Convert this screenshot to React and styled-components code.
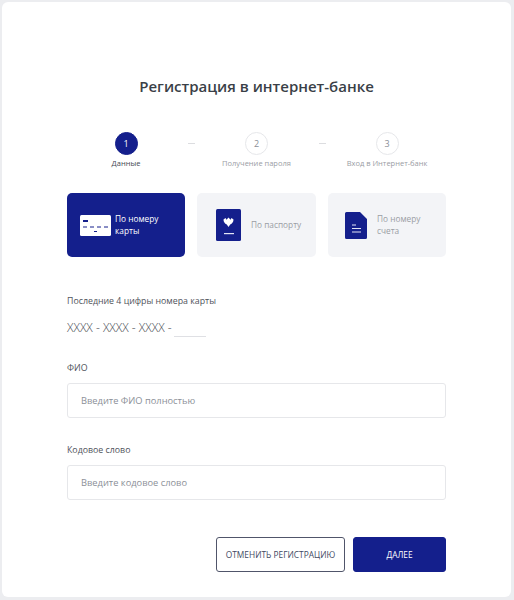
import React from 'react';
import styled, { createGlobalStyle } from 'styled-components';

const navy = '#141f8c';

const GlobalStyle = createGlobalStyle`
  html, body {
    margin: 0;
    padding: 0;
    background: #ecedf0;
    font-family: "Open Sans", "Noto Sans", sans-serif;
  }
  * { box-sizing: border-box; }
`;

const Page = styled.div`
  width: 514px;
  height: 600px;
  padding: 2px 3px 3px 2px;
`;

const Card = styled.main`
  height: 595px;
  background: #fff;
  border-radius: 6px;
  padding: 73px 65px 0;
`;

const Title = styled.h1`
  margin: 0 0 35px;
  font-size: 15px;
  line-height: 22px;
  font-weight: 600;
  color: #3a3f47;
  text-align: center;
`;

const Stepper = styled.div`
  display: grid;
  grid-template-columns: 118px 12px 119px 12px 118px;
  justify-content: center;
  margin-bottom: 25px;
`;

const Step = styled.div`
  display: flex;
  flex-direction: column;
  align-items: center;
  gap: 3px;
`;

const StepCircle = styled.div`
  width: 23px;
  height: 23px;
  border-radius: 50%;
  display: flex;
  align-items: center;
  justify-content: center;
  font-size: 9px;
  background: ${p => (p.$active ? navy : '#fff')};
  color: ${p => (p.$active ? '#fff' : '#8b8f97')};
  border: 1px solid ${p => (p.$active ? navy : '#e6e7ea')};
`;

const StepLabel = styled.div`
  font-size: 7.5px;
  line-height: 10px;
  white-space: nowrap;
  color: ${p => (p.$active ? '#444852' : '#9a9da4')};
`;

const StepDash = styled.div`
  width: 7px;
  height: 1px;
  margin: 11px auto 0;
  background: #dcdde0;
`;

const Methods = styled.div`
  display: grid;
  grid-template-columns: 118px 119px 118px;
  gap: 12px;
  margin-bottom: 38px;
`;

const Method = styled.div`
  height: 64px;
  border-radius: 5px;
  display: flex;
  align-items: center;
  padding-left: ${p => p.$pad}px;
  gap: ${p => p.$gap}px;
  font-size: 8.3px;
  line-height: 12px;
  background: ${p => (p.$active ? navy : '#f3f4f7')};
  color: ${p => (p.$active ? '#fff' : '#9a9da4')};
`;

const Field = styled.div`
  margin-bottom: ${p => p.$mb}px;
`;

const Label = styled.div`
  font-size: 8.8px;
  line-height: 12px;
  color: #4f535b;
  margin-bottom: ${p => p.$mb}px;
`;

const CardMask = styled.div`
  display: flex;
  align-items: flex-end;
  gap: 2px;
  font-size: 12px;
  line-height: 14px;
  font-weight: 300;
  color: #44484f;
`;

const DigitsLine = styled.div`
  width: 32px;
  height: 14px;
  margin-bottom: -2px;
  border-bottom: 1px solid #dfe0e4;
`;

const Input = styled.div`
  height: 35px;
  padding-left: 13px;
  display: flex;
  align-items: center;
  border: 1px solid #e6e7ea;
  border-radius: 3px;
  font-size: 9.3px;
  color: #8b8f97;
`;

const Actions = styled.div`
  display: flex;
  justify-content: flex-end;
  gap: 8px;
  margin-top: 37px;
`;

const Button = styled.button`
  width: ${p => p.$w}px;
  height: 35px;
  border-radius: 3px;
  font-family: inherit;
  font-size: 8.35px;
  padding: 0;
  border: 1px solid ${p => (p.$primary ? navy : '#50556a')};
  background: ${p => (p.$primary ? navy : '#fff')};
  color: ${p => (p.$primary ? '#fff' : '#3f4a63')};
`;

const CardIcon = () => (
  <svg width="31" height="21" viewBox="0 0 31 21">
    <rect width="31" height="21" rx="1.5" fill="#fff" />
    <rect x="3" y="5" width="5" height="2" fill={navy} />
    <path d="M3 12h4M10 12h4M17 12h4M24 12h4M14 16.500h3" stroke={navy} strokeWidth="1" />
  </svg>
);

const PassportIcon = () => (
  <svg width="25" height="32" viewBox="0 0 25 32">
    <rect width="25" height="32" rx="1.5" fill={navy} />
    <path d="M7.500 10.500L9.500 9l1 1.800L12.500 8.500l2 2.300 1-1.800 2 1.500c0 2.400-1.300 4.200-3.300 5L12.500 18l-1.700-2.500c-2-.8-3.300-2.600-3.300-5z" fill="#fff" />
    <rect x="8" y="24" width="10" height="1.200" fill="#e3e5f5" />
  </svg>
);

const DocIcon = () => (
  <svg width="22" height="27" viewBox="0 0 22 27">
    <path d="M1.500 0H15l7 7v18.500a1.500 1.500 0 0 1-1.500 1.500h-19A1.500 1.500 0 0 1 0 25.500v-24A1.500 1.500 0 0 1 1.500 0z" fill={navy} />
    <path d="M7 13h4M7 16.500h9M7 20h9" stroke="#e3e5f5" strokeWidth="1" />
  </svg>
);

const steps = [
  { n: 1, label: 'Данные', active: true },
  { n: 2, label: 'Получение пароля' },
  { n: 3, label: 'Вход в Интернет-банк' },
];

const App = () => {
  return (
    <Page>
      <GlobalStyle />
      <Card>
        <Title>Регистрация в интернет-банке</Title>
        <Stepper>
          {steps.map((s, i) => (
            <React.Fragment key={s.n}>
              <Step>
                <StepCircle $active={s.active}>{s.n}</StepCircle>
                <StepLabel $active={s.active}>{s.label}</StepLabel>
              </Step>
              {i < 2 && <StepDash />}
            </React.Fragment>
          ))}
        </Stepper>
        <Methods>
          <Method $active $pad={13} $gap={4}>
            <CardIcon />
            <div>По номеру<br />карты</div>
          </Method>
          <Method $pad={19} $gap={10}>
            <PassportIcon />
            <div>По паспорту</div>
          </Method>
          <Method $pad={17} $gap={10}>
            <DocIcon />
            <div>По номеру<br />счета</div>
          </Method>
        </Methods>
        <Field $mb={27}>
          <Label $mb={14}>Последние 4 цифры номера карты</Label>
          <CardMask>
            XXXX - XXXX - XXXX -
            <DigitsLine />
          </CardMask>
        </Field>
        <Field $mb={26}>
          <Label $mb={9}>ФИО</Label>
          <Input>Введите ФИО полностью</Input>
        </Field>
        <Field>
          <Label $mb={9}>Кодовое слово</Label>
          <Input>Введите кодовое слово</Input>
        </Field>
        <Actions>
          <Button $w={129}>ОТМЕНИТЬ РЕГИСТРАЦИЮ</Button>
          <Button $primary $w={93}>ДАЛЕЕ</Button>
        </Actions>
      </Card>
    </Page>
  );
};

export default App;
